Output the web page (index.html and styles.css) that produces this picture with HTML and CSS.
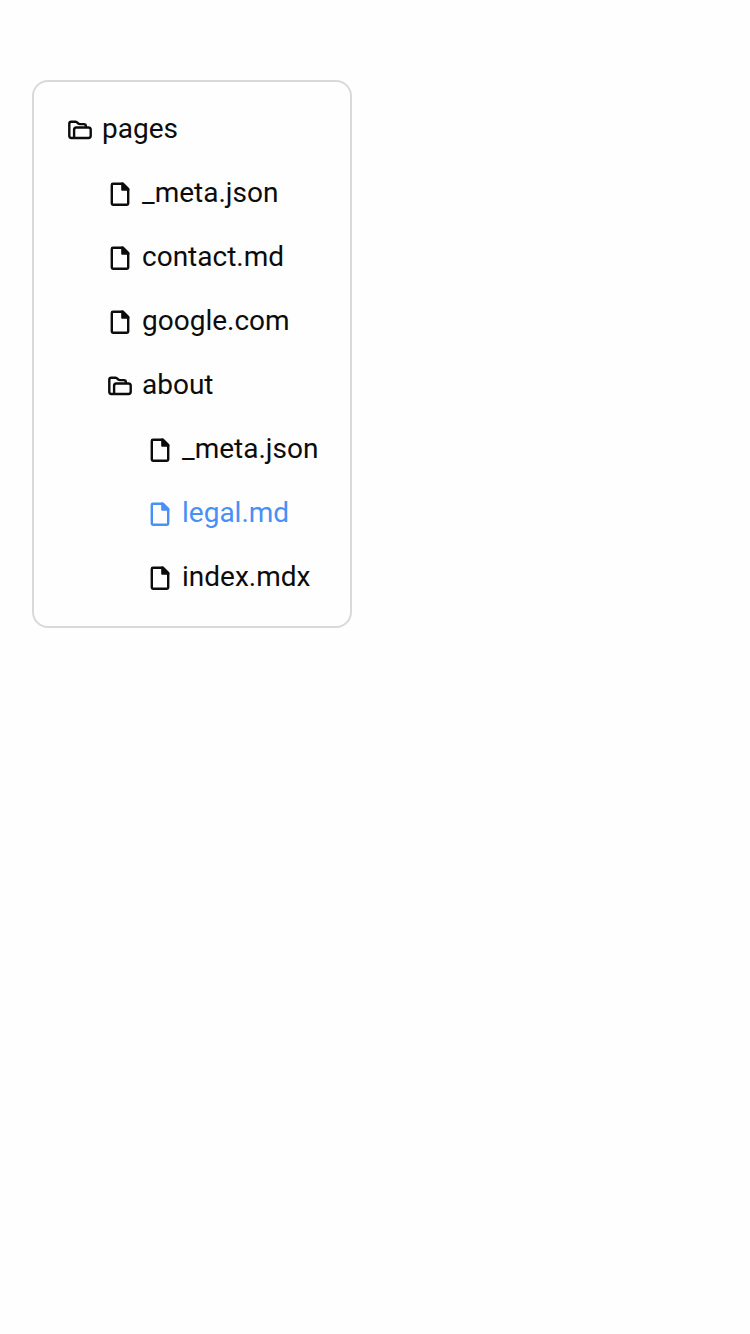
FILE: index.html
```html
<!DOCTYPE html>
<html lang="en">
<head>
<meta charset="utf-8">
<title>Pages</title>
<link rel="stylesheet" href="styles.css">
</head>
<body>
<svg class="symbols" aria-hidden="true">
  <symbol id="folder" viewBox="0 0 24 24">
    <path d="M6.2 20H3.3Q1.3 20 1.3 18V5.8Q1.3 3.8 3.3 3.8H7.6Q8.7 3.8 9.4 4.8Q10.3 6.1 11.8 6.1H15.7Q17.9 6.1 17.9 8.2V9.2"/>
    <path d="M6.1 20V11.8Q6.1 9.5 8.3 9.5H20.4Q22.7 9.5 22.7 11.8V17.8Q22.7 20 20.5 20H6.1"/>
  </symbol>
  <symbol id="file" viewBox="0 0 24 24">
    <path d="M14.8 1.7H5Q3.8 1.7 3.8 2.9V21.5Q3.8 22.7 5 22.7H19Q20.2 22.7 20.2 21.5V7.1Z"/>
    <path class="fold" d="M13.2 .6H15L21.3 6.6V8.8H14.2Q13.2 8.8 13.2 7.8Z"/>
  </symbol>
</svg>
<ul class="tree">
  <li class="row"><svg class="icon"><use href="#folder"/></svg><span class="name">pages</span></li>
  <li><ul class="branch">
    <li class="row"><svg class="icon"><use href="#file"/></svg><span class="name">_meta.json</span></li>
    <li class="row"><svg class="icon"><use href="#file"/></svg><span class="name">contact.md</span></li>
    <li class="row"><svg class="icon"><use href="#file"/></svg><span class="name">google.com</span></li>
    <li class="row"><svg class="icon"><use href="#folder"/></svg><span class="name">about</span></li>
    <li><ul class="branch">
      <li class="row"><svg class="icon"><use href="#file"/></svg><span class="name">_meta.json</span></li>
      <li class="row active"><svg class="icon"><use href="#file"/></svg><span class="name">legal.md</span></li>
      <li class="row"><svg class="icon"><use href="#file"/></svg><span class="name">index.mdx</span></li>
    </ul></li>
  </ul></li>
</ul>
</body>
</html>
```
FILE: styles.css
```css
* { box-sizing: border-box; }
body {
  margin: 0;
  padding: 80px 32px;
  background: #fefefe;
  color: #0c0c0d;
  font: 28px/32px Roboto, sans-serif;
}
ul { list-style: none; margin: 0; padding: 0; }
.symbols { position: absolute; width: 0; height: 0; }
.tree {
  width: 320px;
  height: 548px;
  padding: 16px 34px;
  border: 2px solid #d9d9d9;
  border-radius: 16px;
}
.branch { padding-left: 40px; }
.row {
  display: flex;
  align-items: center;
  gap: 10px;
  height: 64px;
  white-space: nowrap;
}
.name { padding-bottom: 2px; }
.icon {
  flex: none;
  width: 24px;
  height: 24px;
  fill: none;
  stroke: currentColor;
  stroke-width: 2.4;
  stroke-linejoin: round;
}
.fold { fill: currentColor; stroke: none; }
.active { color: #4690f7; }
```
